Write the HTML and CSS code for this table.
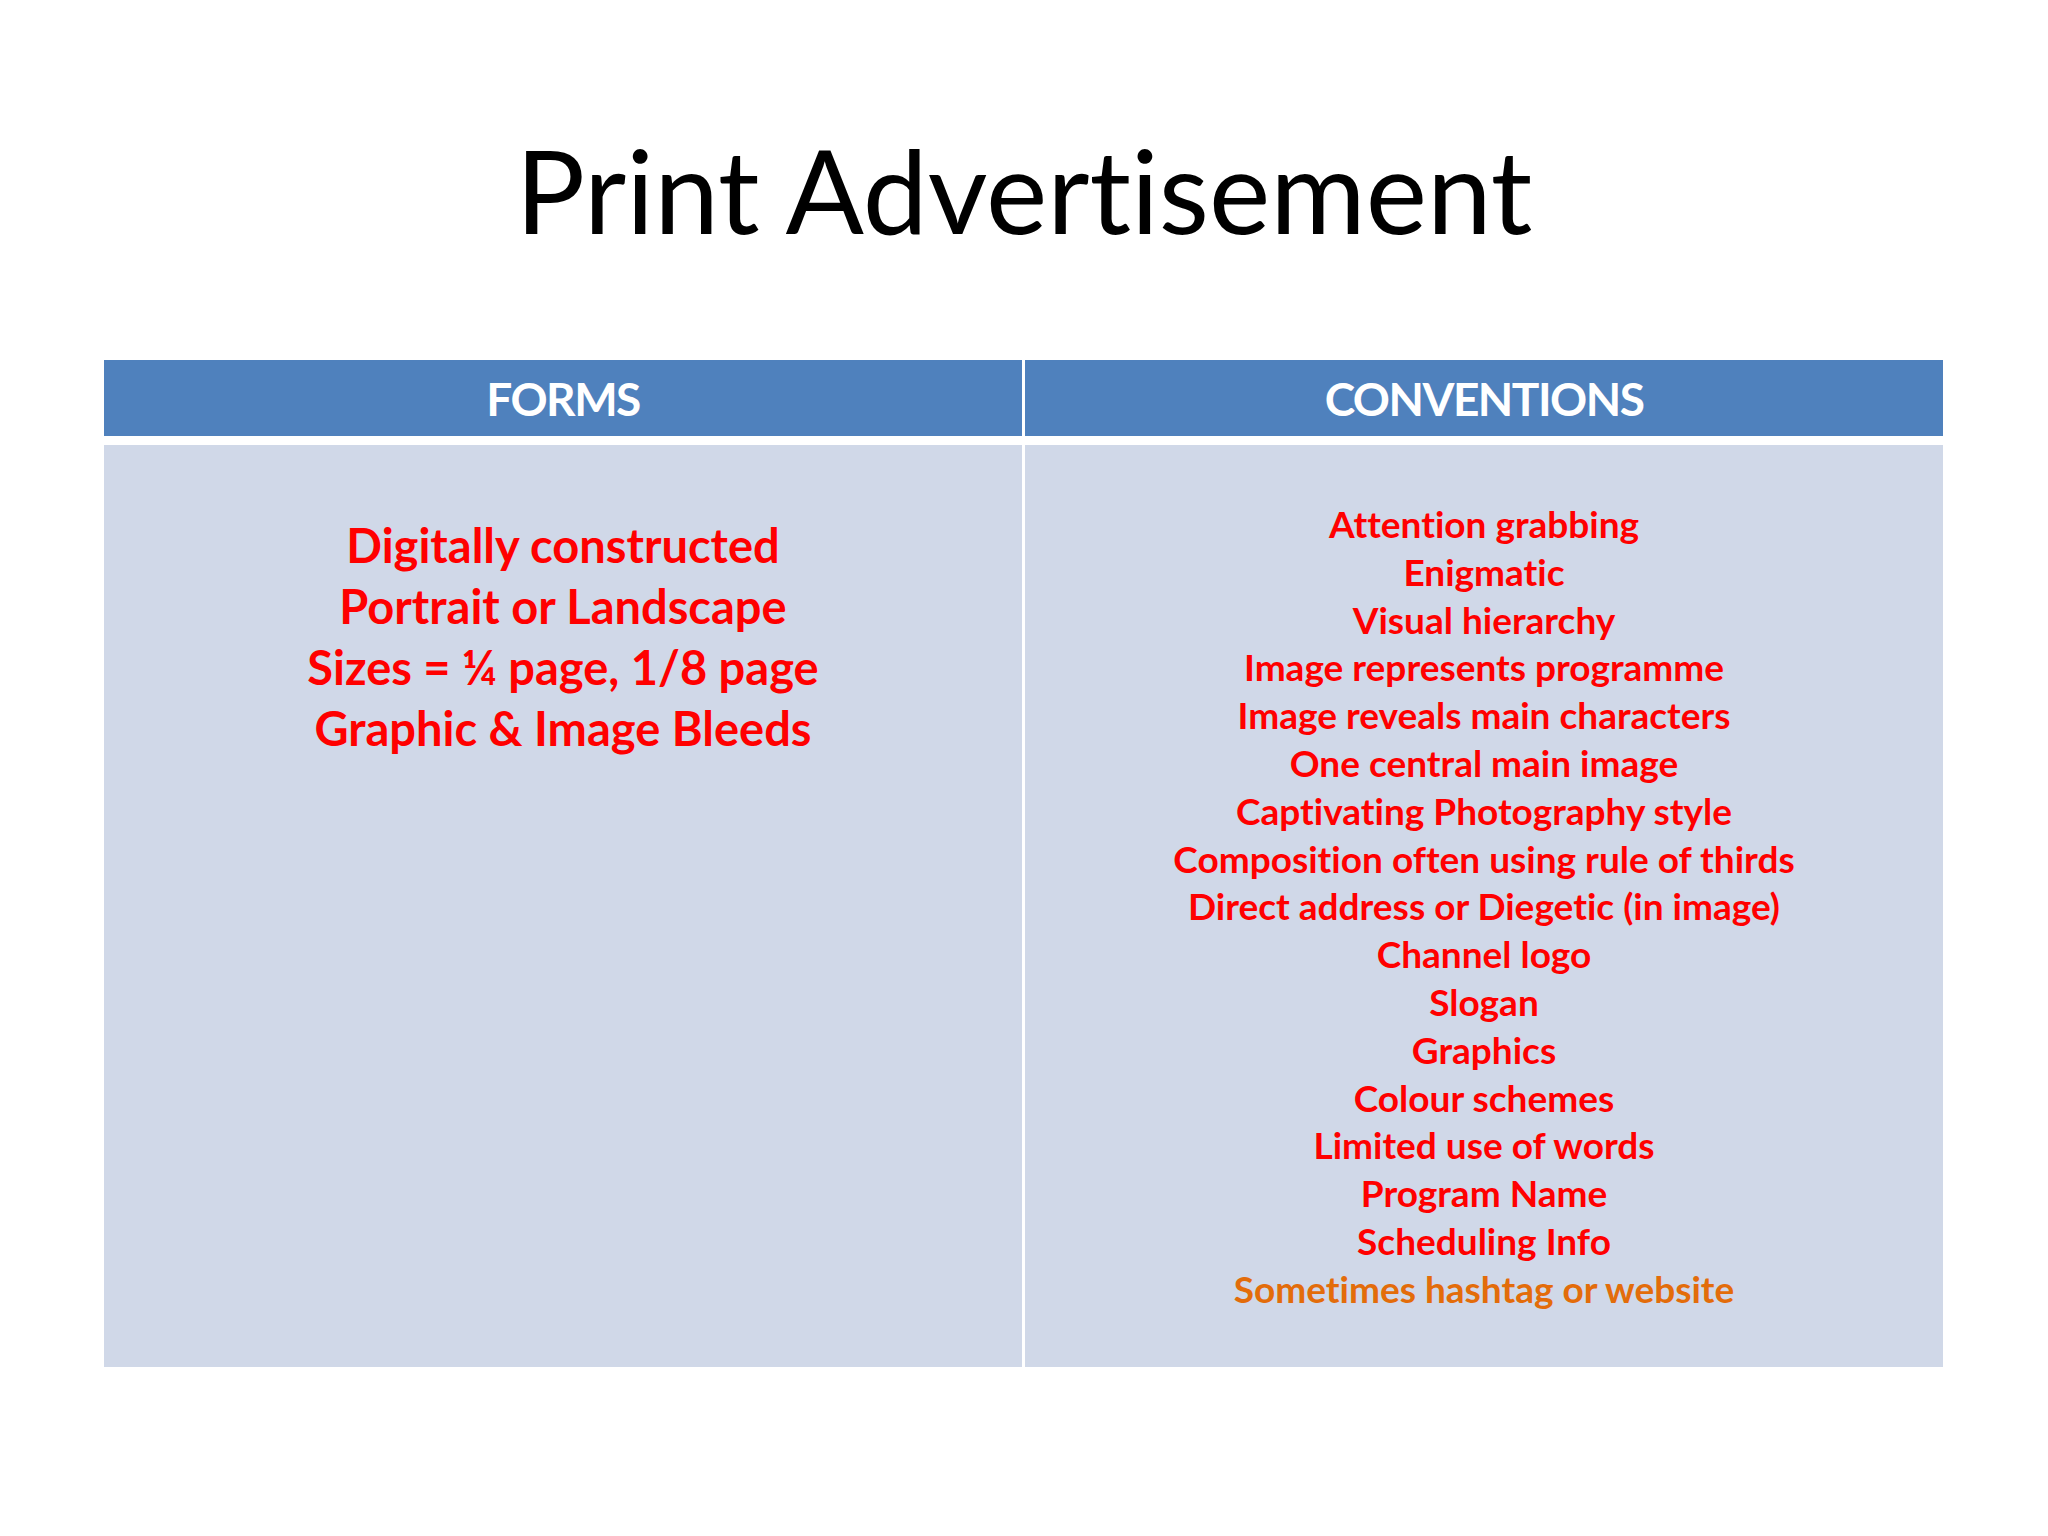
FILE: index.html
```html
<!DOCTYPE html>
<html lang="en">
<head>
<meta charset="utf-8">
<title>Print Advertisement</title>
<link rel="stylesheet" href="styles.css">
</head>
<body>
<div class="slide">
  <h1 class="title">Print Advertisement</h1>
  <div class="table">
    <div class="th">FORMS</div>
    <div class="th">CONVENTIONS</div>
    <div class="td forms">
      <p>Digitally constructed</p>
      <p>Portrait or Landscape</p>
      <p>Sizes = ¼ page, 1/8 page</p>
      <p>Graphic &amp; Image Bleeds</p>
    </div>
    <div class="td conventions">
      <p>Attention grabbing</p>
      <p>Enigmatic</p>
      <p>Visual hierarchy</p>
      <p>Image represents programme</p>
      <p>Image reveals main characters</p>
      <p>One central main image</p>
      <p>Captivating Photography style</p>
      <p>Composition often using rule of thirds</p>
      <p>Direct address or Diegetic (in image)</p>
      <p>Channel logo</p>
      <p>Slogan</p>
      <p>Graphics</p>
      <p>Colour schemes</p>
      <p>Limited use of words</p>
      <p>Program Name</p>
      <p>Scheduling Info</p>
      <p class="orange">Sometimes hashtag or website</p>
    </div>
  </div>
</div>
</body>
</html>
```

FILE: styles.css
```css
html, body {
  margin: 0;
  padding: 0;
  background: #ffffff;
}

.slide {
  width: 2048px;
  height: 1536px;
  background: #ffffff;
  font-family: "Lato", "Open Sans", "Liberation Sans", sans-serif;
  font-variant-ligatures: none;
  font-feature-settings: "liga" 0, "dlig" 0;
  overflow: hidden;
}

.title {
  margin: 123px 0 0 0;
  font-size: 116px;
  line-height: 134px;
  font-weight: 400;
  color: #000000;
  text-align: center;
}

.table {
  margin: 103px 0 0 104px;
  width: 1839px;
  display: grid;
  grid-template-columns: 1fr 1fr;
  grid-template-rows: 76px 922px;
  column-gap: 3px;
  row-gap: 9px;
  background: #ffffff;
}

.th {
  background: #4f81bd;
  color: #ffffff;
  font-weight: 700;
  font-size: 46px;
  letter-spacing: -1.5px;
  display: flex;
  align-items: center;
  justify-content: center;
}

.td {
  background: #d0d8e8;
  text-align: center;
  font-weight: 700;
  color: #ff0000;
}

.td p {
  margin: 0;
}

.forms {
  padding-top: 70px;
  font-size: 47px;
  line-height: 61px;
}

.conventions {
  padding-top: 55px;
  font-size: 37px;
  line-height: 47.8px;
}

.orange {
  color: #e36c0a;
}
```
